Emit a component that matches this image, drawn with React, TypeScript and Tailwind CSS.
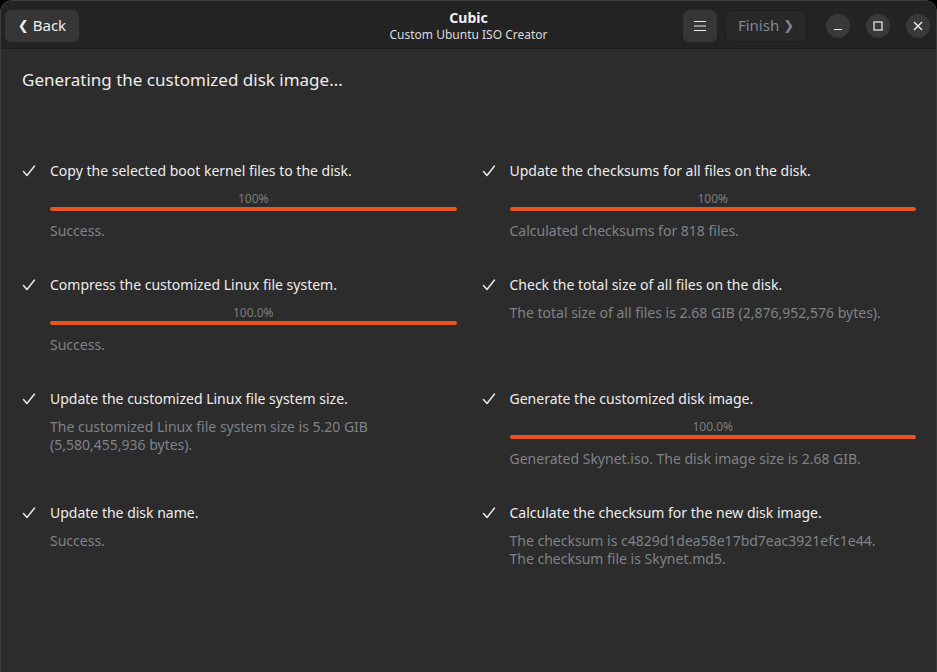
import React from "react"

type Step = {
  title: string
  percent?: string
  lines: string[]
}

const leftSteps: Step[] = [
  { title: "Copy the selected boot kernel files to the disk.", percent: "100%", lines: ["Success."] },
  { title: "Compress the customized Linux file system.", percent: "100.0%", lines: ["Success."] },
  {
    title: "Update the customized Linux file system size.",
    lines: ["The customized Linux file system size is 5.20 GIB", "(5,580,455,936 bytes)."],
  },
  { title: "Update the disk name.", lines: ["Success."] },
]

const rightSteps: Step[] = [
  { title: "Update the checksums for all files on the disk.", percent: "100%", lines: ["Calculated checksums for 818 files."] },
  {
    title: "Check the total size of all files on the disk.",
    lines: ["The total size of all files is 2.68 GIB (2,876,952,576 bytes)."],
  },
  {
    title: "Generate the customized disk image.",
    percent: "100.0%",
    lines: ["Generated Skynet.iso. The disk image size is 2.68 GIB."],
  },
  {
    title: "Calculate the checksum for the new disk image.",
    lines: ["The checksum is c4829d1dea58e17bd7eac3921efc1e44.", "The checksum file is Skynet.md5."],
  },
]

const Check = () => (
  <svg width="14" height="14" viewBox="0 0 14 14" className="mt-[3px] shrink-0">
    <polyline points="1.5,7.5 5,11.5 12.5,2" fill="none" stroke="#e8e8e8" strokeWidth="1.5" strokeLinecap="round" strokeLinejoin="round" />
  </svg>
)

function StepItem({ step }: { step: Step }) {
  return (
    <div className="flex h-[114px] gap-[14px]">
      <Check />
      <div className="flex flex-1 flex-col">
        <div className="h-5 text-[14px] leading-5 text-[#ececec]">{step.title}</div>
        {step.percent ? (
          <>
            <div className="mt-[11px] h-[14px] text-center text-[12px] leading-[14px] text-[#7c7c7c]">{step.percent}</div>
            <div className="mt-px h-[4px] w-full rounded-full bg-[#e95420]" />
            <div className="mt-[11px] text-[14px] leading-[18px] text-[#7d8388]">
              {step.lines.map((l) => (
                <div key={l}>{l}</div>
              ))}
            </div>
          </>
        ) : (
          <div className="mt-[9px] text-[14px] leading-[18px] text-[#7d8388]">
            {step.lines.map((l) => (
              <div key={l}>{l}</div>
            ))}
          </div>
        )}
      </div>
    </div>
  )
}

export default function App() {
  return (
    <div className="h-[672px] w-[937px] overflow-hidden bg-black" style={{ fontFamily: '"Noto Sans", "Liberation Sans", sans-serif' }}>
      <div className="flex h-full flex-col overflow-hidden rounded-t-[12px] border border-b-0 border-[#3c3c3c] bg-[#2c2c2c]">
        {/* header bar */}
        <div className="relative flex h-[48px] shrink-0 items-center border-b border-[#1b1b1b] bg-[#232323] pl-1">
          <button className="mt-[2px] flex h-8 w-[74px] items-center justify-center gap-1 rounded-md bg-[#363636] text-[15px] text-[#f0f0f0]">
            <span className="text-[13px]" style={{ fontFamily: '"DejaVu Sans", sans-serif' }}>❮</span>
            <span>Back</span>
          </button>
          <div className="absolute left-1/2 top-[7px] -translate-x-1/2 text-center">
            <div className="text-[14px] font-bold leading-[19px] text-[#f2f2f2]">Cubic</div>
            <div className="text-[12px] leading-[15px] text-[#dcdcdc]">Custom Ubuntu ISO Creator</div>
          </div>
          <div className="ml-auto mt-[2px] flex items-center">
            <button className="flex h-8 w-[34px] items-center justify-center rounded-md bg-[#363636]">
              <svg width="12" height="12" viewBox="0 0 12 12">
                <path d="M0 1.5h12M0 6h12M0 10.5h12" stroke="#eeeeee" strokeWidth="1.2" />
              </svg>
            </button>
            <button className="ml-2 flex h-8 w-[82px] items-center justify-center gap-1 rounded-md border border-[#1e1e1e] bg-[#282828] text-[15px] text-[#7d8791]">
              <span>Finish</span>
              <span className="text-[13px]" style={{ fontFamily: '"DejaVu Sans", sans-serif' }}>❯</span>
            </button>
            <div className="ml-[19px] flex items-center gap-4 pr-[6px]">
              <div className="flex h-6 w-6 items-center justify-center rounded-full bg-[#393939]">
                <svg width="10" height="10" viewBox="0 0 10 10">
                  <path d="M1 8.5h8" stroke="#f0f0f0" strokeWidth="1.2" />
                </svg>
              </div>
              <div className="flex h-6 w-6 items-center justify-center rounded-full bg-[#393939]">
                <svg width="10" height="10" viewBox="0 0 10 10">
                  <rect x="1" y="1" width="8" height="8" fill="none" stroke="#f0f0f0" strokeWidth="1.2" />
                </svg>
              </div>
              <div className="flex h-6 w-6 items-center justify-center rounded-full bg-[#393939]">
                <svg width="10" height="10" viewBox="0 0 10 10">
                  <path d="M1 1l8 8M9 1l-8 8" stroke="#f0f0f0" strokeWidth="1.4" />
                </svg>
              </div>
            </div>
          </div>
        </div>

        {/* body */}
        <div className="flex-1 pl-[21px] pr-[20px]">
          <div className="mt-[19px] text-[17px] leading-[24px] text-[#ededed]">Generating the customized disk image...</div>
          <div className="mt-[69px] grid grid-cols-2 gap-x-[25px]">
            <div className="flex flex-col">
              {leftSteps.map((s) => (
                <StepItem key={s.title} step={s} />
              ))}
            </div>
            <div className="flex flex-col">
              {rightSteps.map((s) => (
                <StepItem key={s.title} step={s} />
              ))}
            </div>
          </div>
        </div>
      </div>
    </div>
  )
}
